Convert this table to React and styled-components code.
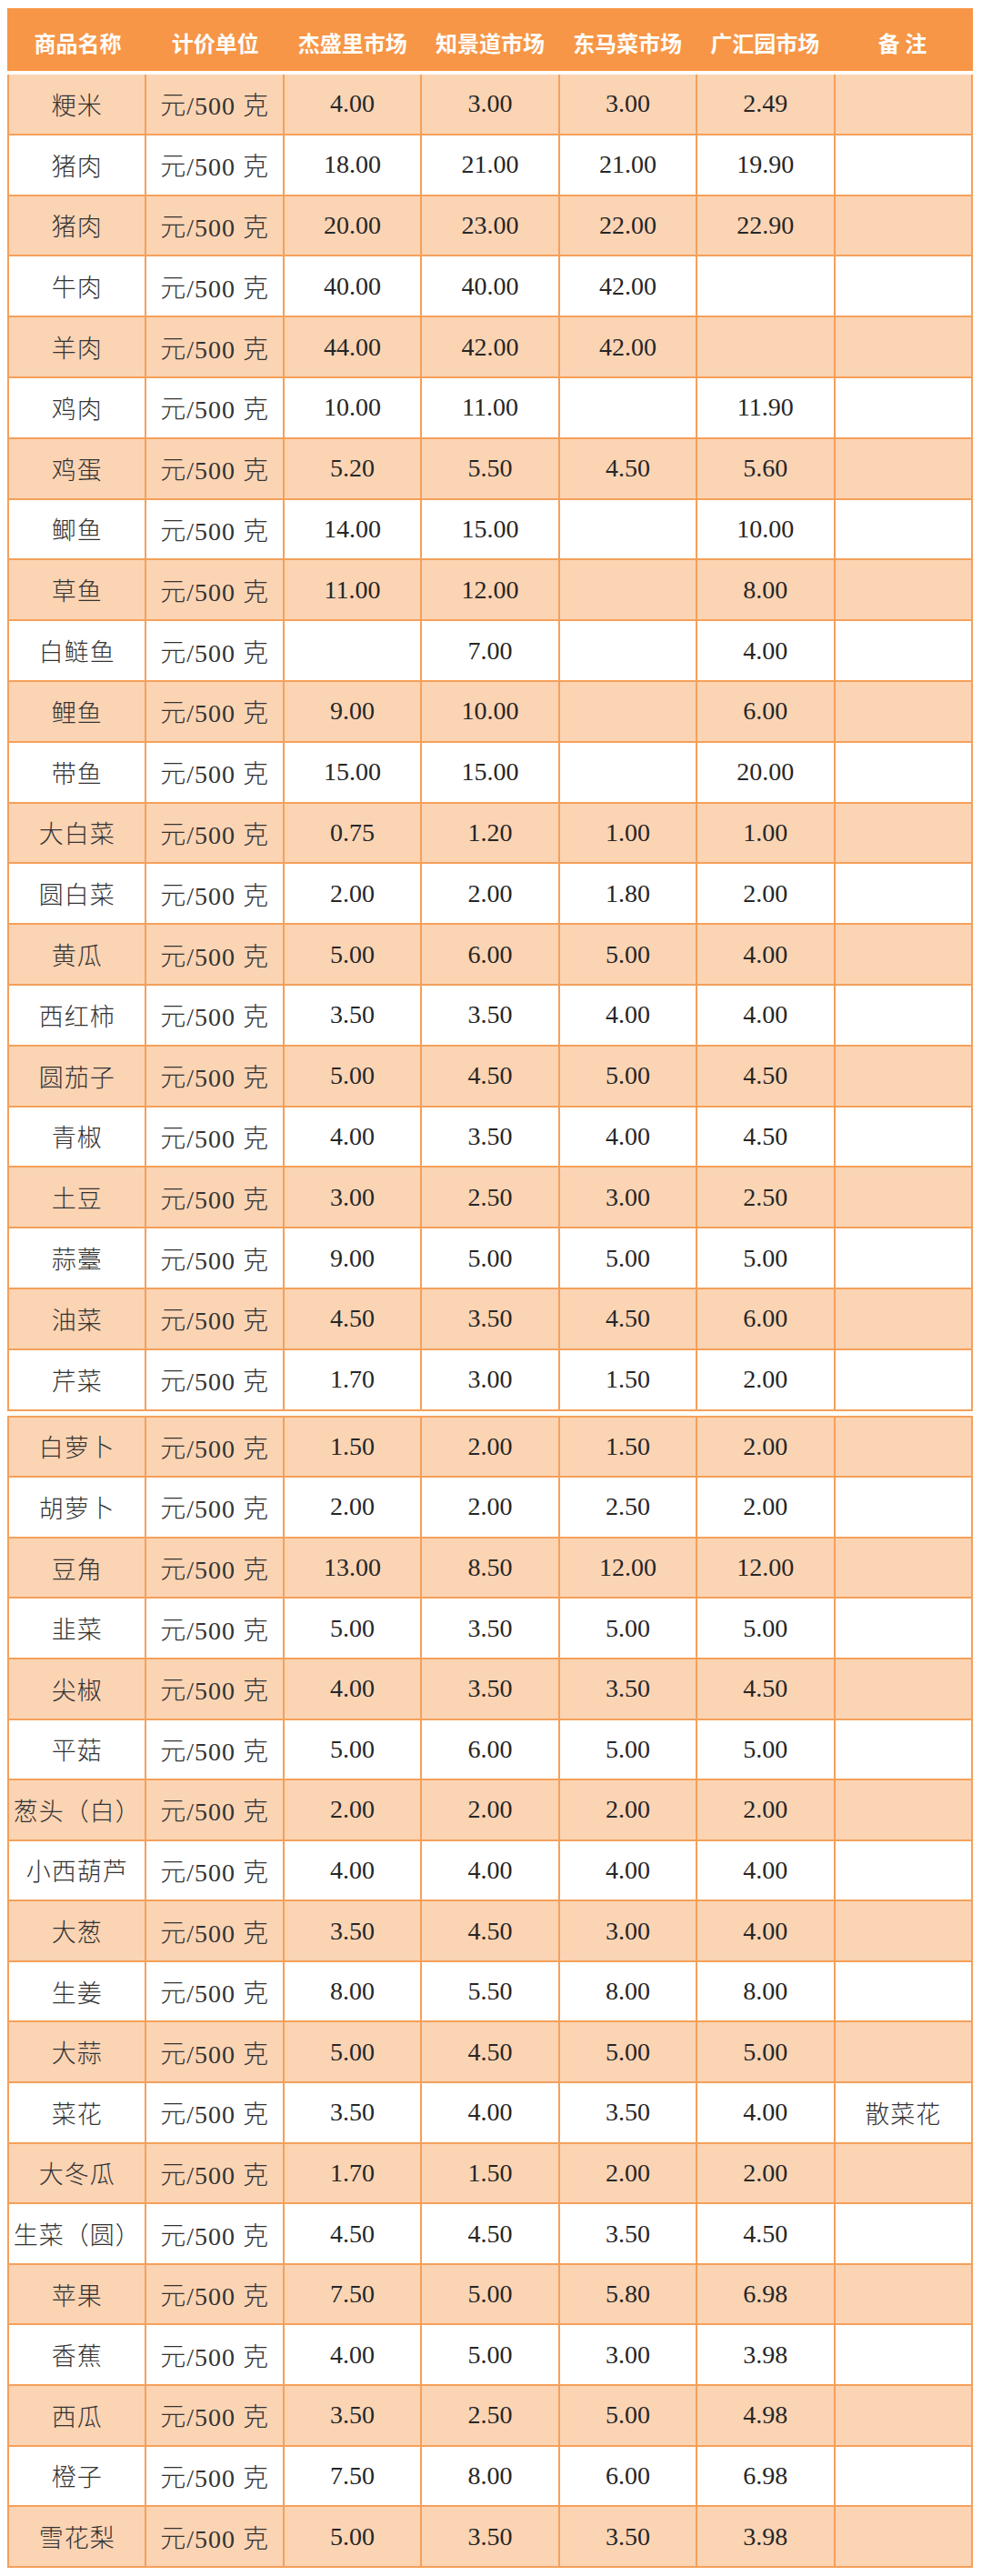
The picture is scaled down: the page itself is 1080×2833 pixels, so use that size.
import React from "react"
import styled, { createGlobalStyle } from "styled-components"

const colors = {
  orange: "#f79646",
  line: "#f5a05a",
  peach: "#fbd4b4",
  white: "#ffffff",
  text: "#262626",
}

const GlobalStyle = createGlobalStyle`
  html, body {
    margin: 0;
    padding: 0;
    background: ${colors.white};
  }
`

const Page = styled.div`
  width: 1062px;
  padding: 9px 0 9px 8px;
`

const Header = styled.div`
  display: grid;
  grid-template-columns: repeat(7, 1fr);
  height: 69px;
  padding: 0 2px;
  background: ${colors.orange};
  border-bottom: 4px solid ${colors.white};
`

const HeadCell = styled.div`
  display: flex;
  align-items: center;
  justify-content: center;
  padding-top: 6px;
  color: ${colors.white};
  font-family: "Noto Sans CJK SC", "Noto Sans", sans-serif;
  font-weight: 700;
  font-size: 24px;
  white-space: pre;
`

const Body = styled.div`
  display: grid;
  grid-template-columns: repeat(7, 1fr);
  grid-auto-rows: ${(p) => p.rowHeight}px;
  gap: 2px;
  background: ${colors.line};
  border: 2px solid ${colors.line};
  border-top-width: ${(p) => (p.first ? 0 : 2)}px;
  margin-top: ${(p) => (p.first ? 0 : 5)}px;
`

const Cell = styled.div`
  display: flex;
  align-items: center;
  justify-content: center;
  background: ${(p) => (p.shaded ? colors.peach : colors.white)};
  color: ${colors.text};
  font-family: "Liberation Serif", "Noto Sans CJK SC", serif;
  font-weight: 300;
  font-size: 28px;
  white-space: nowrap;
`

const Name = styled.span`
  font-family: "Noto Sans CJK SC", serif;
  font-weight: 300;
  font-size: 27px;
  letter-spacing: 1px;
  color: #333;
`

const Unit = styled.span`
  letter-spacing: 1px;
  color: #333;
`

const heads = ["商品名称", "计价单位", "杰盛里市场", "知景道市场", "东马菜市场", "广汇园市场", "备 注"]

const first = [
  ["粳米", "4.00", "3.00", "3.00", "2.49"],
  ["猪肉", "18.00", "21.00", "21.00", "19.90"],
  ["猪肉", "20.00", "23.00", "22.00", "22.90"],
  ["牛肉", "40.00", "40.00", "42.00", ""],
  ["羊肉", "44.00", "42.00", "42.00", ""],
  ["鸡肉", "10.00", "11.00", "", "11.90"],
  ["鸡蛋", "5.20", "5.50", "4.50", "5.60"],
  ["鲫鱼", "14.00", "15.00", "", "10.00"],
  ["草鱼", "11.00", "12.00", "", "8.00"],
  ["白鲢鱼", "", "7.00", "", "4.00"],
  ["鲤鱼", "9.00", "10.00", "", "6.00"],
  ["带鱼", "15.00", "15.00", "", "20.00"],
  ["大白菜", "0.75", "1.20", "1.00", "1.00"],
  ["圆白菜", "2.00", "2.00", "1.80", "2.00"],
  ["黄瓜", "5.00", "6.00", "5.00", "4.00"],
  ["西红柿", "3.50", "3.50", "4.00", "4.00"],
  ["圆茄子", "5.00", "4.50", "5.00", "4.50"],
  ["青椒", "4.00", "3.50", "4.00", "4.50"],
  ["土豆", "3.00", "2.50", "3.00", "2.50"],
  ["蒜薹", "9.00", "5.00", "5.00", "5.00"],
  ["油菜", "4.50", "3.50", "4.50", "6.00"],
  ["芹菜", "1.70", "3.00", "1.50", "2.00"],
]

const second = [
  ["白萝卜", "1.50", "2.00", "1.50", "2.00"],
  ["胡萝卜", "2.00", "2.00", "2.50", "2.00"],
  ["豆角", "13.00", "8.50", "12.00", "12.00"],
  ["韭菜", "5.00", "3.50", "5.00", "5.00"],
  ["尖椒", "4.00", "3.50", "3.50", "4.50"],
  ["平菇", "5.00", "6.00", "5.00", "5.00"],
  ["葱头（白）", "2.00", "2.00", "2.00", "2.00"],
  ["小西葫芦", "4.00", "4.00", "4.00", "4.00"],
  ["大葱", "3.50", "4.50", "3.00", "4.00"],
  ["生姜", "8.00", "5.50", "8.00", "8.00"],
  ["大蒜", "5.00", "4.50", "5.00", "5.00"],
  ["菜花", "3.50", "4.00", "3.50", "4.00", "散菜花"],
  ["大冬瓜", "1.70", "1.50", "2.00", "2.00"],
  ["生菜（圆）", "4.50", "4.50", "3.50", "4.50"],
  ["苹果", "7.50", "5.00", "5.80", "6.98"],
  ["香蕉", "4.00", "5.00", "3.00", "3.98"],
  ["西瓜", "3.50", "2.50", "5.00", "4.98"],
  ["橙子", "7.50", "8.00", "6.00", "6.98"],
  ["雪花梨", "5.00", "3.50", "3.50", "3.98"],
]

const PriceTable = ({ rows, first: isFirst, rowHeight }) => (
  <Body first={isFirst} rowHeight={rowHeight}>
    {rows.map((row, i) => {
      const [name, a, b, c, d, note = ""] = row
      const shaded = i % 2 === 0
      return (
        <React.Fragment key={`${name}-${i}`}>
          <Cell shaded={shaded}>
            <Name>{name}</Name>
          </Cell>
          <Cell shaded={shaded}>
            <Unit>元/500 克</Unit>
          </Cell>
          <Cell shaded={shaded}>{a}</Cell>
          <Cell shaded={shaded}>{b}</Cell>
          <Cell shaded={shaded}>{c}</Cell>
          <Cell shaded={shaded}>{d}</Cell>
          <Cell shaded={shaded}>
            <Name>{note}</Name>
          </Cell>
        </React.Fragment>
      )
    })}
  </Body>
)

export default function App() {
  return (
    <Page>
      <GlobalStyle />
      <Header>
        {heads.map((h) => (
          <HeadCell key={h}>{h}</HeadCell>
        ))}
      </Header>
      <PriceTable rows={first} first rowHeight={64.8} />
      <PriceTable rows={second} rowHeight={64.6} />
    </Page>
  )
}
